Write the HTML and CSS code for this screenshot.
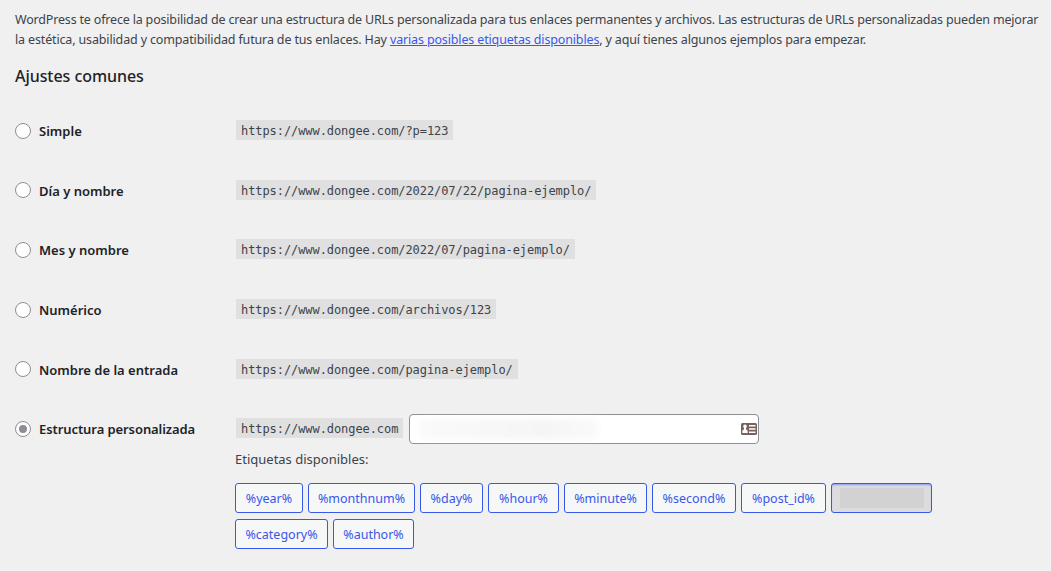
FILE: index.html
```html
<!DOCTYPE html>
<html lang="es">
<head>
    <meta charset="UTF-8">
    <meta name="viewport" content="width=device-width, initial-scale=1.0">
    <title>Ajustes de los enlaces permanentes</title>
    <link rel="stylesheet" href="styles.css">
</head>
<body>

    <div class="wrap">
        <p class="intro">
            <span class="line-one">WordPress te ofrece la posibilidad de crear una estructura de URLs personalizada para tus enlaces permanentes y archivos. Las estructuras de URLs personalizadas pueden mejorar</span><br>
            <span class="line-two">la estética, usabilidad y compatibilidad futura de tus enlaces. Hay <a href="#">varias posibles etiquetas disponibles</a>, y aquí tienes algunos ejemplos para empezar.</span>
        </p>

        <h2>Ajustes comunes</h2>

        <form class="form-table">
            <div class="row">
                <label><input type="radio" name="selection"><span>Simple</span></label>
                <div><code>https://www.dongee.com/?p=123</code></div>
            </div>
            <div class="row">
                <label><input type="radio" name="selection"><span>Día y nombre</span></label>
                <div><code>https://www.dongee.com/2022/07/22/pagina-ejemplo/</code></div>
            </div>
            <div class="row">
                <label><input type="radio" name="selection"><span>Mes y nombre</span></label>
                <div><code>https://www.dongee.com/2022/07/pagina-ejemplo/</code></div>
            </div>
            <div class="row">
                <label><input type="radio" name="selection"><span>Numérico</span></label>
                <div><code>https://www.dongee.com/archivos/123</code></div>
            </div>
            <div class="row">
                <label><input type="radio" name="selection"><span>Nombre de la entrada</span></label>
                <div><code>https://www.dongee.com/pagina-ejemplo/</code></div>
            </div>
            <div class="row">
                <label><input type="radio" name="selection" checked><span class="long">Estructura personalizada</span></label>
                <div class="custom">
                    <code>https://www.dongee.com</code>
                    <div class="structure">
                        <span class="smudge"></span>
                        <svg width="16" height="12" viewBox="0 0 16 12">
                            <rect width="16" height="12" rx="1.5" fill="#78605f"/>
                            <circle cx="4" cy="3.4" r="1.8" fill="#fff"/>
                            <path d="M3 4.5h2v1.7l1.7 1.6V10H1.3V7.8L3 6.2z" fill="#fff"/>
                            <path d="M8 2h6.5v1.5H8zM8 5.2h6.5v1.5H8zM8 8.4h6.5v1.5H8z" fill="#fff"/>
                        </svg>
                    </div>
                </div>
            </div>
        </form>

        <!-- Etiquetas de la estructura -->
        <div class="available">
            <p>Etiquetas disponibles:</p>
            <div class="tags">
                <button class="w68">%year%</button>
                <button class="w107">%monthnum%</button>
                <button class="w63">%day%</button>
                <button class="w71">%hour%</button>
                <button class="w83">%minute%</button>
                <button class="w84">%second%</button>
                <button class="w85">%post_id%</button>
                <button class="active"><span></span></button>
                <button class="w93">%category%</button>
                <button class="w81">%author%</button>
            </div>
        </div>
    </div>

</body>
</html>
```

FILE: styles.css
```css
* {
    box-sizing: border-box;
}

body {
    margin: 0;
    background: #f0f0f1;
    color: #3c434a;
    font-family: "Noto Sans", "Open Sans", sans-serif;
    font-size: 12.5px;
    line-height: 19.5px;
}

.wrap {
    padding: 10px 0 0 15px;
}

.intro {
    margin: 0;
    white-space: nowrap;
}

.line-one {
    letter-spacing: -0.178px;
}

.line-two {
    letter-spacing: -0.147px;
}

a {
    color: #3858e9;
}

h2 {
    margin: 17px 0 14px;
    color: #1d2327;
    font-size: 16px;
    font-weight: 500;
    line-height: 20px;
    letter-spacing: -0.06px;
}

/* Opciones */
.row {
    display: grid;
    grid-template-columns: 221px 1fr;
    align-items: center;
    height: 59.67px;
}

label {
    display: flex;
    align-items: center;
    gap: 8px;
    padding-top: 2px;
    color: #1d2327;
    font-size: 13px;
    font-weight: 600;
}

label span {
    padding-top: 2px;
}

.long {
    letter-spacing: -0.08px;
}

input[type="radio"] {
    appearance: none;
    display: grid;
    place-items: center;
    width: 16px;
    height: 16px;
    margin: 0;
    border: 1px solid #8c8f94;
    border-radius: 50%;
    background: #fff;
}

input[type="radio"]:checked::before {
    content: "";
    width: 8px;
    height: 8px;
    border-radius: 50%;
    background: #8c8f94;
}

code {
    display: inline-block;
    height: 20px;
    padding: 0 5px;
    background: #e0e0e1;
    font-family: "DejaVu Sans Mono", monospace;
    font-size: 12px;
    line-height: 23px;
    letter-spacing: -0.075px;
    vertical-align: middle;
}

.custom {
    display: flex;
    align-items: center;
    gap: 6px;
}

.structure {
    display: flex;
    align-items: center;
    justify-content: space-between;
    width: 350px;
    height: 30px;
    margin-top: 2px;
    padding: 0 1px 0 9px;
    border: 1px solid #8c8f94;
    border-radius: 4px;
    background: #fff;
}

.smudge {
    width: 180px;
    height: 20px;
    background: linear-gradient(90deg, #fafafa, #f5f5f5 70%, #fafafa);
    filter: blur(3px);
}

/* Etiquetas */
.available {
    margin-left: 220px;
    margin-top: -8px;
}

.available p {
    margin: 0 0 14px;
    font-size: 13px;
}

.tags {
    display: flex;
    flex-wrap: wrap;
    gap: 6px 5px;
    width: 720px;
}

button {
    height: 30px;
    padding: 0;
    border: 1px solid #3858e9;
    border-radius: 3px;
    background: #f6f7f7;
    color: #3858e9;
    font-family: inherit;
    font-size: 12.5px;
}

.w63 { width: 63px; }
.w68 { width: 68px; }
.w71 { width: 71px; }
.w81 { width: 81px; }
.w83 { width: 83px; }
.w84 { width: 84px; }
.w85 { width: 85px; }
.w93 { width: 93px; }
.w107 { width: 107px; }

.active {
    display: grid;
    place-items: center;
    width: 101px;
    background: #dcdcde;
    box-shadow: inset 0 2px 3px -2px #3858e9;
}

.active span {
    width: 84px;
    height: 20px;
    background: #d2d2d2;
}
```
